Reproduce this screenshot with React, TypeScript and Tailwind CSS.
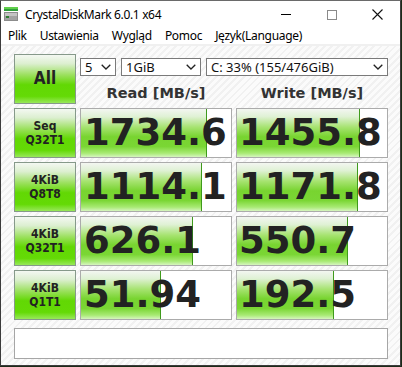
import React from "react";

type Row = {
  l1: string;
  l2: string;
  read: string;
  write: string;
  readBar: number;
  writeBar: number;
};

// bar widths in px (inner cell width is 150)
const rows: Row[] = [
  { l1: "Seq", l2: "Q32T1", read: "1734.6", write: "1455.8", readBar: 126, writeBar: 123 },
  { l1: "4KiB", l2: "Q8T8", read: "1114.1", write: "1171.8", readBar: 121, writeBar: 121 },
  { l1: "4KiB", l2: "Q32T1", read: "626.1", write: "550.7", readBar: 112, writeBar: 111 },
  { l1: "4KiB", l2: "Q1T1", read: "51.94", write: "192.5", readBar: 80, writeBar: 97 },
];

const uiFont = "font-['Noto_Sans','Open_Sans',sans-serif]";
const boldFont = "font-['DejaVu_Sans_Condensed','DejaVu_Sans',sans-serif]";

function Chevron() {
  return (
    <svg width="10" height="6" viewBox="0 0 10 6" className="shrink-0">
      <path d="M0.7 0.7 L5 5 L9.3 0.7" fill="none" stroke="#222" strokeWidth="1.3" />
    </svg>
  );
}

function Combo({ value, width }: { value: string; width: string }) {
  return (
    <div
      className={`${width} h-[18px] flex items-center justify-between bg-white border border-[#7a7a7a] pl-[4px] pr-[4px] text-[13px] leading-none text-[#111] ${uiFont}`}
    >
      <span>{value}</span>
      <Chevron />
    </div>
  );
}

function TestButton({ children, big }: { children: React.ReactNode; big?: boolean }) {
  return (
    <div
      className={`h-[50px] flex flex-col items-center justify-center border border-[#86998a] bg-[linear-gradient(to_bottom,#f4f8f2_0%,#dcefd0_18%,#9ae05c_42%,#62d804_62%,#64da06_86%,#98e85a_100%)] text-[#222] font-bold ${boldFont} ${
        big ? "text-[17px]" : "text-[12px] leading-[14px]"
      }`}
    >
      {children}
    </div>
  );
}

function ValueCell({ value, bar, pad }: { value: string; bar: number; pad: string }) {
  return (
    <div className="relative h-[50px] bg-white border border-[#ababab] overflow-hidden">
      <div
        className="absolute left-0 top-0 bottom-0 border-r border-[#3f9a1c] bg-[linear-gradient(to_bottom,#f3f6f1_0%,#dff1d4_16%,#a6e370_38%,#78d430_58%,#7ad634_78%,#a8ea74_92%,#d6f5bf_100%)]"
        style={{ width: bar }}
      />
      <div
        className={`relative ${pad} whitespace-nowrap text-[37px] leading-[48px] font-bold text-[#222] font-['DejaVu_Sans',sans-serif]`}
      >
        {value}
      </div>
    </div>
  );
}

function AppIcon() {
  return (
    <svg width="14" height="14" viewBox="0 0 14 14">
      <rect x="0" y="0" width="14" height="2" fill="#5fcf4a" />
      <rect x="0" y="2" width="14" height="2" fill="#2f9e3a" />
      <rect x="0" y="5" width="14" height="9" fill="#8c8c8c" />
      <rect x="1" y="6" width="12" height="3" fill="#c4c4c4" />
      <rect x="1" y="9" width="12" height="4" fill="#a3a3a3" />
      <rect x="2" y="9" width="3" height="2" fill="#2e7d32" />
    </svg>
  );
}

export default function App() {
  return (
    <div className="w-[402px] h-[367px] bg-[#1c2a18]">
      <div className="w-[401px] h-[366px] flex flex-col bg-white border border-[#3c3c3c] border-t-[#6a6a6a]">
        {/* title bar */}
        <div className={`h-[27px] flex items-center ${uiFont} text-[12px] text-black`}>
          <div className="ml-[3px] mt-[-2px]">
            <AppIcon />
          </div>
          <span className="ml-[7px] tracking-[-0.35px]">CrystalDiskMark 6.0.1 x64</span>
          <div className="ml-auto flex items-center h-full">
            <div className="w-[46px] h-full flex items-center justify-center">
              <div className="w-[10px] h-px bg-black" />
            </div>
            <div className="w-[46px] h-full flex items-center justify-center">
              <div className="w-[10px] h-[10px] border border-[#8a8a8a]" />
            </div>
            <div className="w-[45px] h-full flex items-center justify-center">
              <svg width="11" height="11" viewBox="0 0 11 11">
                <path d="M0.5 0.5 L10.5 10.5 M10.5 0.5 L0.5 10.5" stroke="#111" strokeWidth="1.1" />
              </svg>
            </div>
          </div>
        </div>

        {/* menu bar */}
        <div className={`h-[16px] flex items-center gap-[13px] pl-[7px] ${uiFont} text-[12px] text-black tracking-[-0.3px]`}>
          <span>Plik</span>
          <span>Ustawienia</span>
          <span>Wygląd</span>
          <span>Pomoc</span>
          <span>Język(Language)</span>
        </div>
        <div className="h-[2px] bg-[#f0f0f0]" />

        {/* client area */}
        <div className="flex-1 pl-[13px] pt-[8px] bg-[repeating-linear-gradient(135deg,#fbfbfb_0px,#fbfbfb_3px,#f1f1f1_3px,#f1f1f1_5px)]">
          <div className="grid grid-cols-[62px_152px_152px] gap-[4px]">
            <TestButton big>All</TestButton>
            <div className="col-span-2 h-[50px] flex flex-col">
              <div className="mt-[4px] flex gap-[5px]">
                <Combo value="5" width="w-[36px]" />
                <Combo value="1GiB" width="w-[80px]" />
                <Combo value="C: 33% (155/476GiB)" width="w-[182px]" />
              </div>
              <div
                className={`mt-[8px] grid grid-cols-2 gap-[4px] text-center text-[14.5px] leading-[18px] font-bold text-[#333] font-['DejaVu_Sans',sans-serif]`}
              >
                <span>Read [MB/s]</span>
                <span>Write [MB/s]</span>
              </div>
            </div>

            {rows.map((r, i) => (
              <React.Fragment key={i}>
                <TestButton>
                  <span>{r.l1}</span>
                  <span>{r.l2}</span>
                </TestButton>
                <ValueCell value={r.read} bar={r.readBar} pad="pl-[3px]" />
                <ValueCell value={r.write} bar={r.writeBar} pad="pl-[2px]" />
              </React.Fragment>
            ))}

            <div className="col-span-3 mt-[4px] h-[31px] bg-white border border-[#a6a6a6]" />
          </div>
        </div>
      </div>
    </div>
  );
}
